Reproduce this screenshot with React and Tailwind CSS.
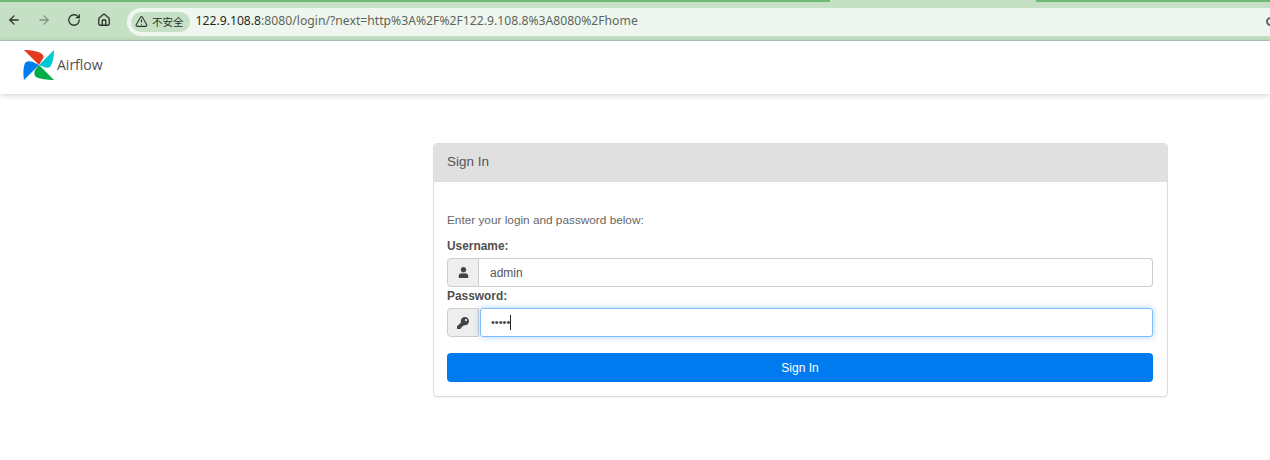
import { ArrowLeft, ArrowRight, RotateCw, Home, TriangleAlert } from 'lucide-react'
import { FaUser, FaKey } from 'react-icons/fa'

const AirflowLogo = () => (
    <svg width="32" height="32" viewBox="0 0 32 32" className="shrink-0">
        <path d="M1 0 C8 0 15 1 19 4 C21 6 21 8 19 10 L16 15 Z" fill="#e43921" />
        <path d="M31 0 C31 6 30 13 27 17 C25 18 23 18 21 17 L16 15 Z" fill="#00c7d4" />
        <path d="M31 30 C24 30 17 29 13 27 C11 25 11 23 12 20 L16 15 Z" fill="#00ad46" />
        <path d="M1 30 C0 24 0 18 2 13 C4 11 7 11 10 12 L16 15 Z" fill="#017cee" />
    </svg>
)

const BrowserBar = () => (
    <div className="h-[41px] bg-[#c5e0c5] border-b border-[#b5c9b5] flex flex-col">
        <div className="h-[2px] flex shrink-0">
            <div className="w-[830px] bg-[#6cbb74]" />
            <div className="w-[206px]" />
            <div className="flex-1 bg-[#6cbb74]" />
        </div>
        <div className="flex items-center flex-1 pb-[2px]">
            <div className="flex items-center w-[127px] shrink-0 pl-[7px] gap-[16px] text-[#2a332a]">
                <ArrowLeft size={14} strokeWidth={2.2} />
                <ArrowRight size={14} strokeWidth={2.2} className="text-[#7f9580]" />
                <RotateCw size={14} strokeWidth={2.2} />
                <Home size={14} strokeWidth={2.2} />
            </div>
            <div className="flex-1 h-[28px] mt-[3px] bg-[#eff6ef] rounded-l-[14px] flex items-center pl-[4px] overflow-hidden">
                <div className="flex items-center gap-[4px] h-[20px] pl-[4px] pr-[6px] bg-[#c5e0c5] rounded-full text-[10.5px] text-[#2a332a] font-['Noto_Sans_CJK_SC',sans-serif]">
                    <TriangleAlert size={13} />
                    <span>不安全</span>
                </div>
                <span className="ml-[6px] text-[12.2px] text-[#1f2a1f] font-['Noto_Sans',sans-serif]">
                    122.9.108.8<span className="text-[#5c665c]">:8080/login/?next=http%3A%2F%2F122.9.108.8%3A8080%2Fhome</span>
                </span>
                <div className="ml-auto mr-[-5px] w-[9px] h-[9px] rounded-full border-2 border-[#666]" />
            </div>
        </div>
    </div>
)

const InputRow = ({ icon, focused, children }) => (
    <div className="flex h-[29px]">
        <div className="w-[32px] shrink-0 flex items-center justify-center bg-[#eeeeee] border border-[#cccccc] rounded-l-[4px] text-[#444]">
            {icon}
        </div>
        {focused ? (
            <div className="flex-1 ml-[1px] flex items-center pl-[10px] bg-white border border-[#80bdff] rounded-[3px] shadow-[0_0_6px_rgba(0,123,255,0.35)] text-[12px] text-[#555]">
                {children}
            </div>
        ) : (
            <div className="flex-1 flex items-center pl-[11px] bg-white border border-l-0 border-[#cccccc] rounded-r-[4px] text-[12px] text-[#555]">
                {children}
            </div>
        )}
    </div>
)

export default function App() {
    return (
        <div className="w-[1270px] h-[460px] bg-white overflow-hidden font-['Liberation_Sans',sans-serif] text-[#51504f]">
            <BrowserBar />
            <nav className="h-[53px] bg-white shadow-[0_1px_6px_rgba(0,0,0,0.2)] flex items-center pl-[23px] pb-[4px] gap-[2px]">
                <AirflowLogo />
                <span className="mb-[2px] text-[14px] text-[#51504f] font-['Open_Sans',sans-serif]">Airflow</span>
            </nav>
            <div className="ml-[433px] mt-[49px] w-[735px] h-[254px] border border-[#dddddd] rounded-[4px] shadow-[0_1px_1px_rgba(0,0,0,0.05)] overflow-hidden">
                <div className="h-[38px] bg-[#e0e0e0] flex items-center px-[13px] pb-[1px] text-[13.5px] text-[#555]">Sign In</div>
                <div className="pl-[13px] pr-[14px] pt-[31px]">
                    <p className="text-[11.8px] leading-[14px] text-[#666]">Enter your login and password below:</p>
                    <label className="block mt-[12px] text-[11.9px] leading-[14px] font-bold">Username:</label>
                    <div className="mt-[5px]">
                        <InputRow icon={<FaUser size={11} />}>admin</InputRow>
                    </div>
                    <label className="block mt-[1px] text-[11.9px] leading-[16px] font-bold">Password:</label>
                    <div className="mt-[4px]">
                        <InputRow icon={<FaKey size={12} />} focused>
                            <span className="text-[11px] text-[#444]">•••••</span>
                            <span className="w-px h-[15px] bg-[#222]" />
                        </InputRow>
                    </div>
                    <button className="mt-[16px] w-full h-[29px] rounded-[4px] bg-[#007bef] text-white text-[12px]">Sign In</button>
                </div>
            </div>
        </div>
    )
}
